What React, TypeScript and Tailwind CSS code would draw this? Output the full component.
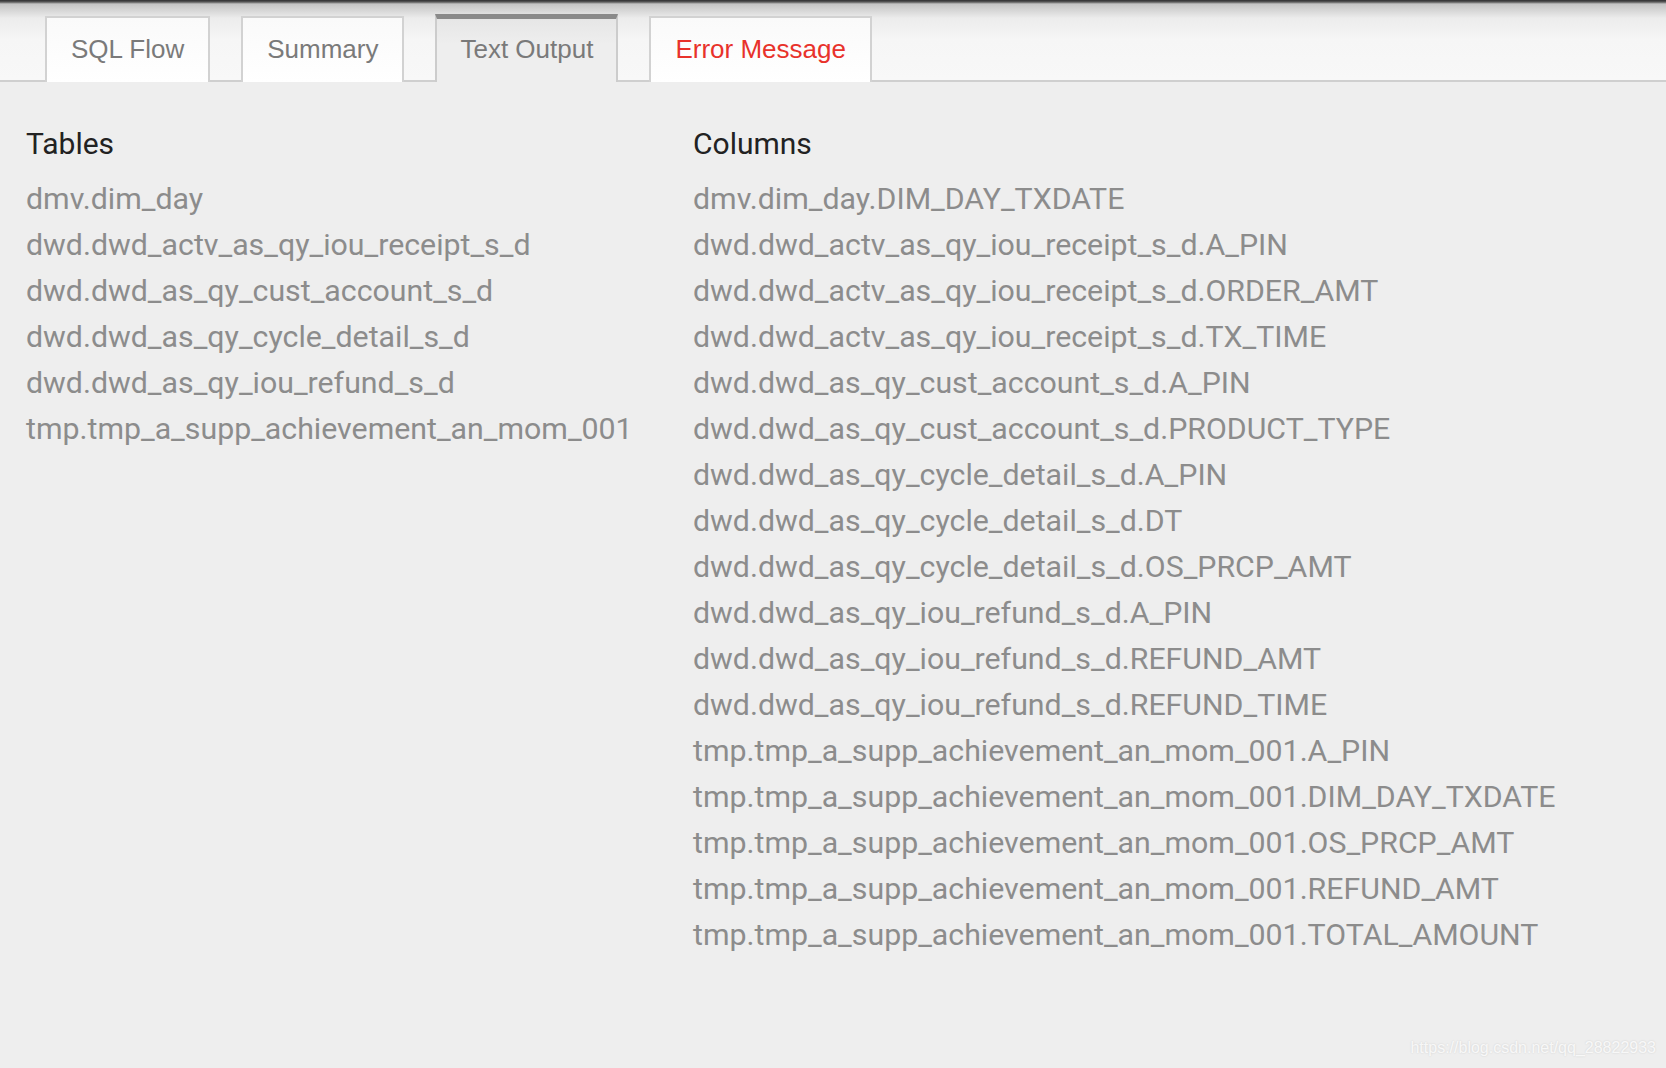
import React from 'react';

const TABS = [
    { label: 'SQL Flow', active: false, error: false },
    { label: 'Summary', active: false, error: false },
    { label: 'Text Output', active: true, error: false },
    { label: 'Error Message', active: false, error: true },
];

const TABLES = [
    'dmv.dim_day',
    'dwd.dwd_actv_as_qy_iou_receipt_s_d',
    'dwd.dwd_as_qy_cust_account_s_d',
    'dwd.dwd_as_qy_cycle_detail_s_d',
    'dwd.dwd_as_qy_iou_refund_s_d',
    'tmp.tmp_a_supp_achievement_an_mom_001',
];

const COLUMNS = [
    'dmv.dim_day.DIM_DAY_TXDATE',
    'dwd.dwd_actv_as_qy_iou_receipt_s_d.A_PIN',
    'dwd.dwd_actv_as_qy_iou_receipt_s_d.ORDER_AMT',
    'dwd.dwd_actv_as_qy_iou_receipt_s_d.TX_TIME',
    'dwd.dwd_as_qy_cust_account_s_d.A_PIN',
    'dwd.dwd_as_qy_cust_account_s_d.PRODUCT_TYPE',
    'dwd.dwd_as_qy_cycle_detail_s_d.A_PIN',
    'dwd.dwd_as_qy_cycle_detail_s_d.DT',
    'dwd.dwd_as_qy_cycle_detail_s_d.OS_PRCP_AMT',
    'dwd.dwd_as_qy_iou_refund_s_d.A_PIN',
    'dwd.dwd_as_qy_iou_refund_s_d.REFUND_AMT',
    'dwd.dwd_as_qy_iou_refund_s_d.REFUND_TIME',
    'tmp.tmp_a_supp_achievement_an_mom_001.A_PIN',
    'tmp.tmp_a_supp_achievement_an_mom_001.DIM_DAY_TXDATE',
    'tmp.tmp_a_supp_achievement_an_mom_001.OS_PRCP_AMT',
    'tmp.tmp_a_supp_achievement_an_mom_001.REFUND_AMT',
    'tmp.tmp_a_supp_achievement_an_mom_001.TOTAL_AMOUNT',
];

function Section({ title, items }: { title: string; items: string[] }) {
    return (
        <div>
            <h3 className="text-[30px] leading-[46px] text-[#222] mb-[9px]">{title}</h3>
            <ul>
                {items.map((item) => (
                    <li key={item} className="text-[30.3px] leading-[46px] text-[#8c8c8c] whitespace-nowrap">
                        {item}
                    </li>
                ))}
            </ul>
        </div>
    );
}

export default function App() {
    return (
        <div className="relative min-h-[1068px] bg-[#eeeeee] font-['Roboto',sans-serif]">
            {/* Tab bar */}
            <div className="h-[82px] flex items-end gap-[31px] pl-[45px] border-b-2 border-[#cfcfcf] bg-[linear-gradient(to_bottom,#2e2e30_0px,#5a5a5a_2px,#c4c4c4_4px,#ececec_18px,#f6f6f6_40px,#f8f8f8_100%)]">
                {TABS.map((tab) =>
                    tab.active ? (
                        <div
                            key={tab.label}
                            className="h-[68px] -mb-[2px] px-[23px] pb-[2px] flex items-center border-x-2 border-t-[5px] border-x-[#cccccc] border-t-[#8a8a8a] bg-[linear-gradient(to_bottom,#e6e6e6,#eeeeee_40%)] font-['Liberation_Sans',Arial,sans-serif] text-[26px] text-[#7a7a7a]"
                        >
                            {tab.label}
                        </div>
                    ) : (
                        <div
                            key={tab.label}
                            className={`h-[66px] -mb-[2px] px-[24px] pb-[2px] flex items-center border-2 border-b-0 border-[#d2d2d2] bg-[linear-gradient(to_bottom,#fafafa,#ffffff)] font-['Liberation_Sans',Arial,sans-serif] text-[26px] ${tab.error ? 'text-[#e8322b]' : 'text-[#7a7a7a]'}`}
                        >
                            {tab.label}
                        </div>
                    )
                )}
            </div>

            {/* Text output */}
            <div className="grid grid-cols-[667px_1fr] pl-[26px] pt-[39px]">
                <Section title="Tables" items={TABLES} />
                <Section title="Columns" items={COLUMNS} />
            </div>

            <span className="absolute right-[10px] bottom-[8px] font-['Liberation_Sans',Arial,sans-serif] text-[16px] text-white/80 [text-shadow:0_0_2px_rgba(0,0,0,0.15)]">
                https://blog.csdn.net/qq_28822933
            </span>
        </div>
    );
}
